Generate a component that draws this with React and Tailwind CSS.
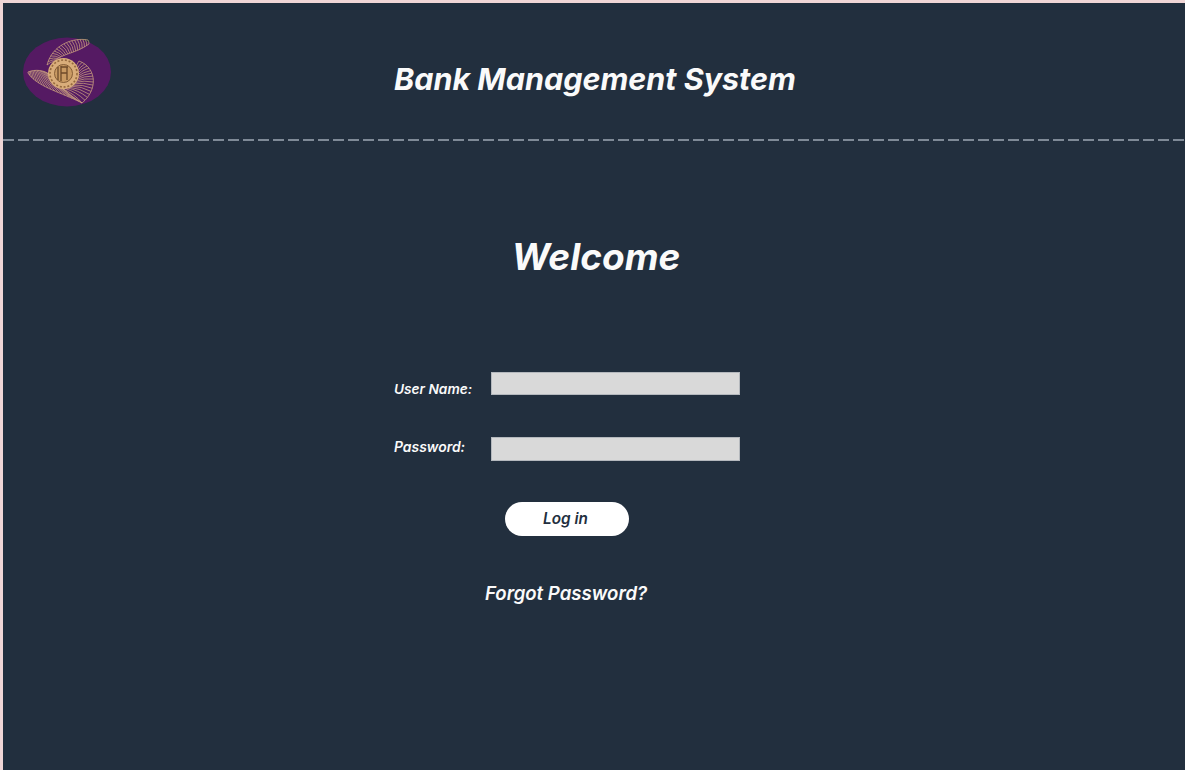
import React from "react";

const bez = (p, t) => {
  const u = 1 - t;
  return [0, 1].map(
    (k) => u * u * u * p[0][k] + 3 * u * u * t * p[1][k] + 3 * u * t * t * p[2][k] + t * t * t * p[3][k]
  );
};
const curve = (p) => `M${p[0][0]} ${p[0][1]}C${p[1][0]} ${p[1][1]} ${p[2][0]} ${p[2][1]} ${p[3][0]} ${p[3][1]}`;

function Shell({ a, b, n, bulge = 0 }) {
  const lines = [];
  for (let i = 0; i <= n; i++) {
    const t = i / n;
    const [x1, y1] = bez(a, t);
    const [x2, y2] = bez(b, t);
    const mx = (x1 + x2) / 2 + bulge * (y2 - y1);
    const my = (y1 + y2) / 2 - bulge * (x2 - x1);
    lines.push(<path key={i} d={`M${x1.toFixed(1)} ${y1.toFixed(1)}Q${mx.toFixed(1)} ${my.toFixed(1)} ${x2.toFixed(1)} ${y2.toFixed(1)}`} />);
  }
  return (
    <g>
      {lines}
      <path d={curve(a)} />
      <path d={curve(b)} />
    </g>
  );
}

function Logo() {
  return (
    <svg width="90" height="72" viewBox="0 0 90 72" className="block shrink-0">
      <ellipse cx="44" cy="35" rx="44" ry="34.5" fill="#551a63" />
      <g fill="none" stroke="#d2a981" strokeWidth="0.7">
        <Shell a={[[24, 28], [29, 8], [50, 0], [65, 3]]} b={[[32, 24], [40, 16], [52, 17], [66, 7]]} n={18} bulge={0.15} />
        <Shell a={[[56, 24], [73, 30], [76, 52], [59, 66]]} b={[[53, 31], [58, 40], [52, 50], [40, 52]]} n={16} bulge={-0.12} />
        <Shell a={[[5, 36], [14, 50], [40, 56], [59, 66]]} b={[[5, 35], [12, 32], [22, 33], [27, 38]]} n={18} bulge={0.08} />
      </g>
      <circle cx="40.5" cy="36.5" r="15.5" fill="#d9ad7a" />
      <circle cx="40.5" cy="36.5" r="13.5" fill="none" stroke="#94683d" strokeWidth="1.6" strokeDasharray="2 1.8" />
      <circle cx="40.5" cy="36.5" r="9" fill="#c99a63" stroke="#7c5530" strokeWidth="0.9" />
      <path d="M35 30v13M38 29v15M38 30h7M38 36h6M44 30v13" fill="none" stroke="#6d4a2a" strokeWidth="1.3" />
    </svg>
  );
}

export default function App() {
  return (
    <div className="h-[770px] w-full overflow-hidden bg-[#222f3e] border-l-[3px] border-t-[3px] border-[#f0d6d6] font-['Inter',sans-serif] italic text-[#fafafa]">
      <header className="relative h-[136px] flex items-start pl-[20px] pt-[34px]">
        <Logo />
        <h1 className="absolute left-[391px] top-[56px] text-[30.5px] leading-[40px] font-bold whitespace-nowrap">
          Bank Management System
        </h1>
      </header>
      <div className="h-[2px] bg-[repeating-linear-gradient(90deg,#7f8a97_0,#7f8a97_11px,transparent_11px,transparent_15px)]" />
      <main className="pt-[94px] pl-[391px]">
        <h2 className="w-[404px] text-center text-[37px] leading-[44px] font-bold">Welcome</h2>
        <form className="mt-[93px] flex flex-col">
          <div className="flex items-start h-[65px]">
            <label className="w-[97px] pt-[8px] text-[13.7px] leading-[18px] font-semibold">User Name:</label>
            <div className="w-[249px] h-[23px] bg-[#d9d9d9] border border-[#b4b8bd]" />
          </div>
          <div className="flex items-start h-[65px]">
            <label className="w-[97px] pt-[1px] text-[13.9px] leading-[18px] font-semibold">Password:</label>
            <div className="w-[249px] h-[24px] bg-[#d9d9d9] border border-[#b4b8bd]" />
          </div>
          <div className="pl-[111px]">
            <button type="button" className="w-[124px] h-[34px] pr-[3px] rounded-full bg-white text-[#222f3e] text-[15.3px] font-semibold italic">
              Log in
            </button>
          </div>
          <a className="mt-[45px] ml-[91px] text-[18.6px] leading-[24px] font-semibold">Forgot Password?</a>
        </form>
      </main>
    </div>
  );
}
